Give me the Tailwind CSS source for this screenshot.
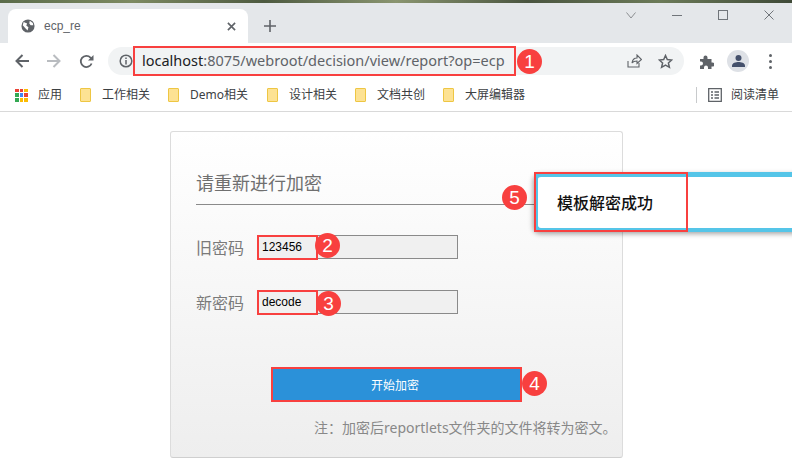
<!DOCTYPE html>
<html lang="zh-CN">

<head>
  <meta charset="UTF-8">
  <script src="https://cdn.jsdelivr.net/npm/@tailwindcss/browser@4"></script>
  <title>ecp_re</title>
</head>

<body class="relative w-[792px] h-[476px] overflow-hidden bg-white font-['Liberation_Sans','Noto_Sans_CJK_SC',sans-serif]">

  <!-- browser chrome -->
  <header class="h-[112px] border-b border-[#d9d9d9] bg-white">
    <div class="h-[3px] bg-[linear-gradient(90deg,#5a6b4a,#7d8a62,#4d5a40,#8a9570,#4a5540,#6b7a58,#3f4a38)]"></div>
    <div class="h-[40px] bg-[#e4e7ea] flex items-end pl-2">
      <div class="w-[240px] h-[34px] bg-white rounded-t-lg flex items-center pl-[13px] pr-[12px]">
        <svg class="w-[14px] h-[14px]" viewBox="0 0 16 16"><circle cx="8" cy="8" r="7.5" fill="#5f6368"/><path d="M3 3.500 7 5 6 7.500 8.500 9.500 7.500 13 5 10.500 2 7ZM10 2 13.500 4.500 14 7 11 7 9.500 5Z" fill="#fff"/></svg>
        <span class="ml-[9px] text-[12px] text-[#5f6368] flex-1">ecp_re</span>
        <svg class="w-[9px] h-[9px]" viewBox="0 0 10 10"><path d="M1 1 9 9M9 1 1 9" stroke="#5f6368" stroke-width="1.800"/></svg>
      </div>
      <svg class="ml-[16px] mb-[11px] w-[12px] h-[12px]" viewBox="0 0 12 12"><path d="M6 0V12M0 6H12" stroke="#5f6368" stroke-width="1.600"/></svg>
      <div class="ml-auto self-start flex items-center h-[24px] gap-[36px] pr-[18px]">
        <svg class="w-[10px] h-[7px]" viewBox="0 0 10 7"><path d="M.5.5 5 6 9.500.5" fill="none" stroke="#8b8e92" stroke-width="1"/></svg>
        <div class="w-[10px] h-px bg-[#70757a]"></div>
        <div class="w-[10px] h-[10px] border border-[#70757a]"></div>
        <svg class="w-[10px] h-[10px]" viewBox="0 0 10 10"><path d="M.5.5 9.500 9.500M9.500.5 .5 9.500" stroke="#70757a" stroke-width="1"/></svg>
      </div>
    </div>
    <div class="h-[36px] flex items-center pl-[15px]">
      <svg class="w-[14px] h-[14px]" viewBox="0 0 14 14"><path d="M14 7H2M7.500 1 1.500 7 7.500 13" fill="none" stroke="#5f6368" stroke-width="2"/></svg>
      <svg class="ml-[18px] w-[14px] h-[14px]" viewBox="0 0 14 14"><path d="M0 7H12M6.500 1 12.500 7 6.500 13" fill="none" stroke="#b9bcc0" stroke-width="2"/></svg>
      <svg class="ml-[18px] w-[15px] h-[15px]" viewBox="0 0 15 15"><path d="M12.600 9.500A5.600 5.600 0 1 1 11.500 3.600L13 5" fill="none" stroke="#5f6368" stroke-width="1.800"/><path d="M14.500 1V6.500H9Z" fill="#5f6368"/></svg>
      <div class="ml-[14px] w-[576px] h-[28px] rounded-full bg-[#f1f3f4] flex items-center pl-[11px]">
        <svg class="w-[14px] h-[14px]" viewBox="0 0 14 14"><circle cx="7" cy="7" r="5.800" fill="none" stroke="#5f6368" stroke-width="1.500"/><path d="M7 6V10.500M7 3.500V5" stroke="#5f6368" stroke-width="1.500"/></svg>
        <span class="ml-[9px] font-['Noto_Sans'] text-[14.5px] text-[#202124]">localhost<span class="text-[#5f6368]">:8075/webroot/decision/view/report?op=ecp</span></span>
        <svg class="ml-auto w-[15px] h-[14px]" viewBox="0 0 15 14"><path d="M1 7V13H12V9M5 9C5.500 5.500 8 4 10 4V1L14.500 5.500 10 9.500V7C8 7 6 7.500 5 9Z" fill="none" stroke="#5f6368" stroke-width="1.100"/></svg>
        <svg class="ml-[16px] mr-[11px] w-[15px] h-[15px]" viewBox="0 0 15 15"><path d="M7.500 1.500 9.300 5.500 13.700 6 10.400 8.900 11.400 13.300 7.500 11 3.600 13.300 4.600 8.900 1.300 6 5.700 5.500Z" fill="none" stroke="#5f6368" stroke-width="1.500"/></svg>
      </div>
      <svg class="ml-[15px] w-[15px] h-[15px]" viewBox="0 0 15 15"><path d="M1 5H4.500V3.500A2 2 0 0 1 8.500 3.500V5H12.500V8.500H13.500A2 2 0 0 1 13.500 12.500H12.500V15H9V13.500A2 2 0 0 0 5 13.500V15H1V11.500H2A2 2 0 0 0 2 7.500H1Z" fill="#5f6368"/></svg>
      <div class="ml-[13px] w-[22px] h-[22px] rounded-full bg-[#dee1e6] flex items-center justify-center">
        <svg class="w-[13px] h-[12px]" viewBox="0 0 13 12"><circle cx="6.500" cy="3" r="3" fill="#44506b"/><path d="M0 12V10.500C0 8 4 7 6.500 7S13 8 13 10.500V12Z" fill="#44506b"/></svg>
      </div>
      <div class="ml-[20px] flex flex-col gap-[3px]">
        <div class="w-[3px] h-[3px] rounded-full bg-[#5f6368]"></div>
        <div class="w-[3px] h-[3px] rounded-full bg-[#5f6368]"></div>
        <div class="w-[3px] h-[3px] rounded-full bg-[#5f6368]"></div>
      </div>
    </div>
    <nav class="h-[32px] flex items-center pl-[15px] text-[12px] text-[#3c4043]">
      <div class="grid grid-cols-3 gap-px w-[13px] h-[13px]">
        <i class="bg-[#ea4335]"></i><i class="bg-[#ea4335]"></i><i class="bg-[#fbbc04]"></i>
        <i class="bg-[#34a853]"></i><i class="bg-[#4285f4]"></i><i class="bg-[#ea4335]"></i>
        <i class="bg-[#34a853]"></i><i class="bg-[#fbbc04]"></i><i class="bg-[#fbbc04]"></i>
      </div>
      <span class="ml-[10px]">应用</span>
      <div class="ml-[18px] w-[11px] h-[14px] bg-[#fde293] border border-[#eec643] rounded-[1px]"></div>
      <span class="ml-[11px]">工作相关</span>
      <div class="ml-[18px] w-[11px] h-[14px] bg-[#fde293] border border-[#eec643] rounded-[1px]"></div>
      <span class="ml-[11px] font-['Noto_Sans','Noto_Sans_CJK_SC']">Demo相关</span>
      <div class="ml-[19px] w-[11px] h-[14px] bg-[#fde293] border border-[#eec643] rounded-[1px]"></div>
      <span class="ml-[11px]">设计相关</span>
      <div class="ml-[18px] w-[11px] h-[14px] bg-[#fde293] border border-[#eec643] rounded-[1px]"></div>
      <span class="ml-[11px]">文档共创</span>
      <div class="ml-[18px] w-[11px] h-[14px] bg-[#fde293] border border-[#eec643] rounded-[1px]"></div>
      <span class="ml-[11px]">大屏编辑器</span>
      <div class="ml-auto w-px h-[16px] bg-[#c8cacc]"></div>
      <svg class="ml-[11px] w-[14px] h-[14px]" viewBox="0 0 14 14"><path d="M.7.7H13.300V13.300H.7ZM3 4H5M3 7H5M3 10H5M6.500 4H11M6.500 7H11M6.500 10H11" fill="none" stroke="#5f6368" stroke-width="1.300"/></svg>
      <span class="ml-[9px] mr-[13px]">阅读清单</span>
    </nav>
  </header>

  <!-- encrypt form -->
  <main class="ml-[170px] mt-[19px] w-[453px] h-[327px] rounded-[3px] border border-[#dcdcdc] border-b-[#cfcfcf] bg-[linear-gradient(#ffffff,#eeeeee)] pl-[25px] flex flex-col">
    <h1 class="mt-[39px] h-[34px] w-[402px] border-b border-[#8a8a8a] text-[18px] leading-[26px] font-normal text-[#6f6f6f]">请重新进行加密</h1>
    <div class="mt-[30px] flex items-center h-[24px] text-[16px] text-[#7a7a7a]">
      <label class="w-[62px] pt-[4px]">旧密码</label>
      <div class="w-[200px] h-[24px] border border-[#8a8a8a] bg-[#f0f0f0] pl-[3px] text-[12px] leading-[23px] text-black">123456</div>
    </div>
    <div class="mt-[31px] flex items-center h-[24px] text-[16px] text-[#7a7a7a]">
      <label class="w-[62px] pt-[4px]">新密码</label>
      <div class="w-[200px] h-[24px] border border-[#8a8a8a] bg-[#f0f0f0] pl-[3px] text-[12px] leading-[23px] text-black">decode</div>
    </div>
    <button class="mt-[53px] ml-[76px] w-[249px] h-[35px] pt-[4px] pr-[3px] bg-[#2b91d9] text-white text-[12px] border-b border-[#2278b5]">开始加密</button>
    <p class="mt-[16px] ml-[118px] whitespace-nowrap font-['Noto_Sans','Noto_Sans_CJK_SC'] text-[14px] leading-[20px] text-[#888888]">注&#xFF1A;加密后reportlets文件夹的文件将转为密文。</p>
  </main>

  <!-- toast -->
  <div class="absolute left-[534px] top-[172px] w-[270px] h-[60px] rounded-l-[7px] border-t-[5px] border-b-[4px] border-l-[4px] border-[#55c5e8] bg-white shadow-[-1px_2px_5px_rgba(0,0,0,0.35)] pl-[19px] text-[16px] leading-[54px] font-medium text-[#111111]">模板解密成功</div>

  <!-- red annotations -->
  <div class="absolute left-[133px] top-[46px] w-[383px] h-[30px] border-2 border-[#f8403f]"></div>
  <div class="absolute left-[257px] top-[235px] w-[61px] h-[25px] border-2 border-[#f8403f]"></div>
  <div class="absolute left-[257px] top-[290px] w-[61px] h-[25px] border-2 border-[#f8403f]"></div>
  <div class="absolute left-[271px] top-[367px] w-[251px] h-[35px] border-2 border-[#f8403f]"></div>
  <div class="absolute left-[534px] top-[172px] w-[154px] h-[60px] border-2 border-[#f8403f]"></div>

  <div class="absolute left-[517px] top-[49px] w-[25px] h-[25px] rounded-full bg-[#f8403f] text-white text-[19px] leading-[25px] text-center">1</div>
  <div class="absolute left-[315px] top-[233px] w-[25px] h-[25px] rounded-full bg-[#f8403f] text-white text-[19px] leading-[25px] text-center">2</div>
  <div class="absolute left-[316px] top-[291px] w-[25px] h-[25px] rounded-full bg-[#f8403f] text-white text-[19px] leading-[25px] text-center">3</div>
  <div class="absolute left-[522px] top-[371px] w-[25px] h-[25px] rounded-full bg-[#f8403f] text-white text-[19px] leading-[25px] text-center">4</div>
  <div class="absolute left-[502px] top-[185px] w-[25px] h-[25px] rounded-full bg-[#f8403f] text-white text-[19px] leading-[25px] text-center">5</div>

</body>

</html>
